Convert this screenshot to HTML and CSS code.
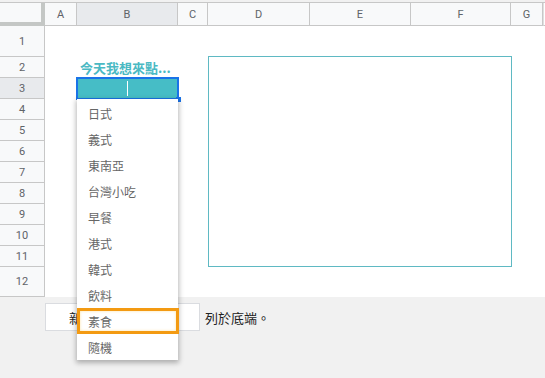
FILE: index.html
```html
<!DOCTYPE html>
<html lang="zh-Hant">
<head>
<meta charset="utf-8">
<title>Sheet</title>
<link rel="stylesheet" href="styles.css">
</head>
<body>
<div class="page">
  <div class="topstrip"></div>
  <div class="sheet">
    <div class="colheads">
      <div class="corner"></div>
      <div class="ch">A</div>
      <div class="ch sel">B</div>
      <div class="ch">C</div>
      <div class="ch">D</div>
      <div class="ch">E</div>
      <div class="ch">F</div>
      <div class="ch">G</div>
      <div class="ch rest"></div>
    </div>
    <div class="body">
      <div class="rowheads">
        <div class="rh">1</div>
        <div class="rh">2</div>
        <div class="rh sel">3</div>
        <div class="rh">4</div>
        <div class="rh">5</div>
        <div class="rh">6</div>
        <div class="rh">7</div>
        <div class="rh">8</div>
        <div class="rh">9</div>
        <div class="rh">10</div>
        <div class="rh">11</div>
        <div class="rh">12</div>
      </div>
      <div class="cells">
        <div class="prompt">今天我想來點...</div>
        <div class="choice"><span class="caret"></span></div>
      </div>
    </div>
  </div>
  <div class="footer">
    <div class="add">新增</div>
    <div class="count">1000</div>
    <span class="footer-text">列於底端。</span>
  </div>
  <div class="chart"></div>
  <ul class="dropdown">
    <li class="item">日式</li>
    <li class="item">義式</li>
    <li class="item">東南亞</li>
    <li class="item">台灣小吃</li>
    <li class="item">早餐</li>
    <li class="item">港式</li>
    <li class="item">韓式</li>
    <li class="item">飲料</li>
    <li class="item hot">素食</li>
    <li class="item">隨機</li>
  </ul>
</div>
</body>
</html>
```

FILE: styles.css
```css
* { box-sizing: border-box; }

html, body {
  margin: 0;
  padding: 0;
  background: #ffffff;
}

.page {
  position: relative;
  width: 545px;
  height: 378px;
  overflow: hidden;
  font-family: Roboto, "Liberation Sans", "Noto Sans CJK TC", sans-serif;
  display: flex;
  flex-direction: column;
}

.topstrip {
  height: 3px;
  background: #f1f1f1;
  border-bottom: 1px solid #c7c7c7;
}

.sheet {
  display: flex;
  flex-direction: column;
  background: #ffffff;
}

.colheads {
  display: grid;
  grid-template-columns: 45px 32px 101px 30px 102px 101px 100px 32px 1fr;
  height: 23px;
}

.corner {
  background: #f8f9fa;
  border-right: 4px solid #c4c7c5;
  border-bottom: 4px solid #c4c7c5;
}

.ch {
  background: #f8f9fa;
  border-right: 1px solid #c7c7c7;
  border-bottom: 1px solid #c7c7c7;
  color: #5f6368;
  font-size: 11px;
  display: flex;
  align-items: center;
  justify-content: center;
}

.ch.sel { background: #e8eaed; }

.ch.rest {
  border-right: none;
  background: #ffffff;
  border-left: 1px solid #e0e0e0;
}

.body {
  display: grid;
  grid-template-columns: 45px 1fr;
}

.rowheads {
  display: grid;
  grid-template-rows: 31px repeat(10, 21px) 30px;
}

.rh {
  background: #f8f9fa;
  border-right: 1px solid #c7c7c7;
  border-bottom: 1px solid #c7c7c7;
  color: #5f6368;
  font-size: 11px;
  display: flex;
  align-items: center;
  justify-content: center;
}

.rh.sel { background: #e8eaed; }

.cells {
  display: grid;
  grid-template-columns: 32px 101px 30px 102px 101px 100px 32px 1fr;
  grid-template-rows: 31px repeat(10, 21px) 30px;
}

.prompt {
  grid-column: 2 / 4;
  grid-row: 2;
  align-self: center;
  padding-left: 3px;
  font-family: "Noto Sans CJK TC", "Liberation Sans", sans-serif;
  font-weight: 700;
  font-size: 13px;
  line-height: 1;
  color: #4ab9c3;
  white-space: nowrap;
}

.choice {
  grid-column: 2;
  grid-row: 3;
  position: relative;
  background: #46bdc6;
  outline: 2px solid #1a73e8;
  outline-offset: -1px;
}

.choice::after {
  content: "";
  position: absolute;
  right: -3px;
  bottom: -3px;
  width: 5px;
  height: 5px;
  background: #1a73e8;
}

.caret {
  position: absolute;
  left: 50px;
  top: 3px;
  width: 1px;
  height: 15px;
  background: #ffffff;
}

.footer {
  flex: 1;
  background: #f1f1f1;
  display: flex;
  align-items: flex-start;
  padding: 6px 0 0 45px;
  font-family: "Noto Sans CJK TC", "Liberation Sans", sans-serif;
  font-size: 13px;
  color: #222222;
}

.add {
  width: 74px;
  height: 28px;
  background: #ffffff;
  border: 1px solid #dadce0;
  display: flex;
  align-items: center;
  justify-content: center;
}

.count {
  width: 81px;
  height: 28px;
  background: #ffffff;
  border: 1px solid #dadce0;
  border-left: none;
  display: flex;
  align-items: center;
  padding-left: 6px;
}

.footer-text {
  margin-left: 5px;
  margin-top: 5px;
  line-height: 20px;
}

.chart {
  position: absolute;
  left: 208px;
  top: 56px;
  width: 304px;
  height: 211px;
  border: 1.5px solid #5fb9c3;
}

.dropdown {
  position: absolute;
  left: 77px;
  top: 99px;
  width: 101px;
  margin: 0;
  padding: 1px 0 0 0;
  list-style: none;
  background: #ffffff;
  box-shadow: 0 2px 5px 1px rgba(0, 0, 0, 0.28);
  font-family: "Noto Sans CJK TC", "Liberation Sans", sans-serif;
  font-size: 12px;
  color: #666666;
}

.item {
  height: 26px;
  display: flex;
  align-items: center;
  padding-left: 11px;
}

.item.hot {
  border: 3px solid #f39a12;
  padding-left: 8px;
  margin-right: -1px;
  box-shadow: inset 0 0 3px #fbe3a8;
}
```
